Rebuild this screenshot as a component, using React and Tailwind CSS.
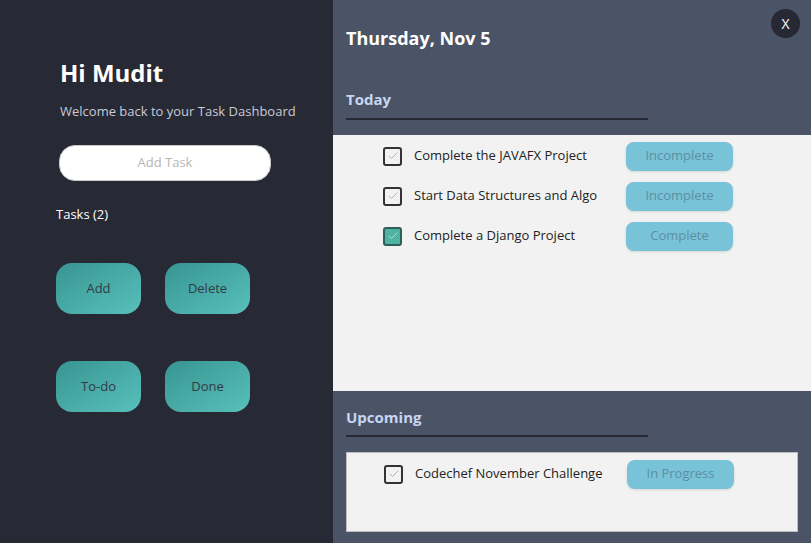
import { Check } from 'lucide-react';

const todayTasks = [
  { title: 'Complete the JAVAFX Project', status: 'Incomplete', done: false },
  { title: 'Start Data Structures and Algo', status: 'Incomplete', done: false },
  { title: 'Complete a Django Project', status: 'Complete', done: true },
];

const upcomingTasks = [{ title: 'Codechef November Challenge', status: 'In Progress', done: false }];

const CheckBox = ({ done }) => (
  <div
    className={`w-[19px] h-[19px] rounded-[3px] border-2 flex items-center justify-center ${
      done ? 'bg-[#4fb3a3] border-[#2f5f58]' : 'bg-[#f2f2f2] border-[#333]'
    }`}
  >
    <Check size={12} strokeWidth={1.5} className={done ? 'text-[#d8f0ea]' : 'text-[#999]'} />
  </div>
);

const TaskRow = ({ task }) => (
  <div className="flex items-center h-[40px] gap-[12px]">
    <CheckBox done={task.done} />
    <span className="flex-1 text-[13px] text-[#222]">{task.title}</span>
    <button className="w-[107px] h-[29px] rounded-lg bg-[#78c3d8] text-[13px] text-[#5d8fa3] shadow-sm">
      {task.status}
    </button>
  </div>
);

const NavButton = ({ label }) => (
  <button className="w-[85px] h-[51px] rounded-2xl bg-gradient-to-br from-[#389591] to-[#58c0bc] text-[13px] text-[#333a44]">
    {label}
  </button>
);

export default function App() {
  return (
    <div
      className="flex w-[811px] h-[543px] overflow-hidden"
      style={{ fontFamily: '"Open Sans", "Noto Sans", sans-serif' }}
    >
      {/* Sidebar */}
      <aside className="w-[333px] bg-[#272935] flex flex-col pl-[56px] pt-[56px]">
        <h1 className="pl-[4px] text-[24px] font-bold text-white leading-[34px]">Hi Mudit</h1>
        <p className="pl-[4px] mt-[12px] text-[13px] text-[#c9cbd6]">Welcome back to your Task Dashboard</p>
        <div className="ml-[3px] mt-[23px] w-[212px] h-[36px] rounded-2xl bg-white border border-[#ccc] flex items-center justify-center text-[13px] text-[#b5b5b5]">
          Add Task
        </div>
        <p className="mt-[24px] text-[13px] text-white">Tasks (2)</p>
        <div className="mt-[39px] grid grid-cols-[85px_85px] gap-x-[24px] gap-y-[47px]">
          <NavButton label="Add" />
          <NavButton label="Delete" />
          <NavButton label="To-do" />
          <NavButton label="Done" />
        </div>
      </aside>

      {/* Main */}
      <main className="flex-1 bg-[#4a5466] flex flex-col relative">
        <button className="absolute top-[9px] right-[11px] w-[29px] h-[29px] rounded-full bg-[#262833] text-white text-[14px] flex items-center justify-center">
          X
        </button>
        <div className="px-[13px] pt-[26px] h-[135px]">
          <h2 className="text-[18px] font-bold text-white leading-[24px]">Thursday, Nov 5</h2>
          <h3 className="mt-[39px] text-[15px] font-bold text-[#c8d6f2] leading-[20px]">Today</h3>
          <div className="mt-[9px] w-[302px] h-[2px] bg-[#262833]" />
        </div>
        <div className="h-[256px] bg-[#f2f2f2] pl-[50px] pr-[78px] pt-[1px]">
          {todayTasks.map((t) => (
            <TaskRow key={t.title} task={t} />
          ))}
        </div>
        <div className="px-[13px] pt-[16px]">
          <h3 className="text-[15px] font-bold text-[#c8d6f2] leading-[20px]">Upcoming</h3>
          <div className="mt-[8px] w-[302px] h-[2px] bg-[#262833]" />
          <div className="mt-[15px] h-[80px] bg-[#f2f2f2] border border-[#bbb] pl-[37px] pr-[63px] pt-[1px]">
            {upcomingTasks.map((t) => (
              <TaskRow key={t.title} task={t} />
            ))}
          </div>
        </div>
      </main>
    </div>
  );
}
